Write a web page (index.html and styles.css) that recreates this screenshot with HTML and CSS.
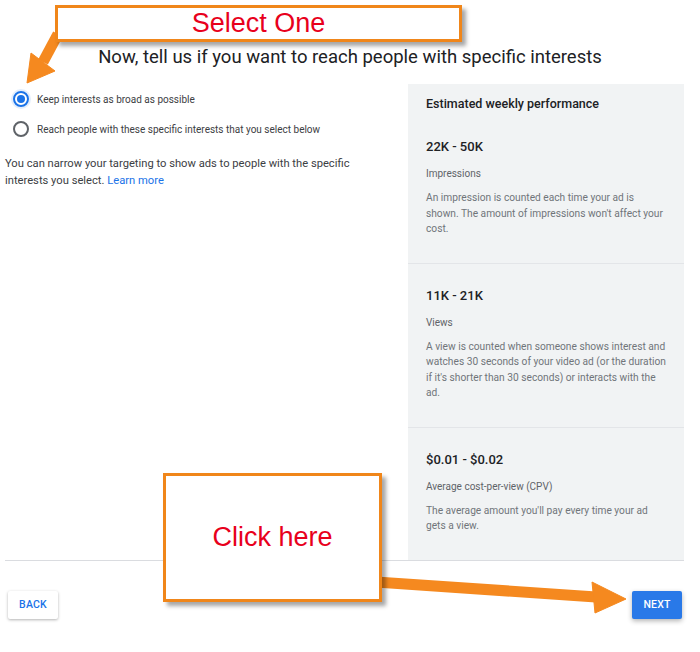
FILE: index.html
```html
<!DOCTYPE html>
<html lang="en">
<head>
    <meta charset="UTF-8">
    <meta name="viewport" content="width=device-width, initial-scale=1.0">
    <title>Interests</title>
    <link rel="stylesheet" href="styles.css">
</head>
<body>
<div class="page">
    <h1 class="title">Now, tell us if you want to reach people with specific interests</h1>
    <div class="content">
        <div class="options">
            <label class="radio-row"><span class="radio checked"></span>Keep interests as broad as possible</label>
            <label class="radio-row"><span class="radio"></span>Reach people with these specific interests that you select below</label>
            <p class="hint">You can narrow your targeting to show ads to people with the specific interests you select. <a href="#">Learn more</a></p>
        </div>
        <aside class="estimate">
            <div class="estimate-title">Estimated weekly performance</div>
            <div class="metric">
                <div class="metric-value">22K - 50K</div>
                <div class="metric-label">Impressions</div>
                <div class="metric-desc">An impression is counted each time your ad is shown. The amount of impressions won't affect your cost.</div>
            </div>
            <div class="metric">
                <div class="metric-value">11K - 21K</div>
                <div class="metric-label">Views</div>
                <div class="metric-desc">A view is counted when someone shows interest and watches 30 seconds of your video ad (or the duration if it's shorter than 30 seconds) or interacts with the ad.</div>
            </div>
            <div class="metric">
                <div class="metric-value">$0.01 - $0.02</div>
                <div class="metric-label">Average cost-per-view (CPV)</div>
                <div class="metric-desc">The average amount you'll pay every time your ad gets a view.</div>
            </div>
        </aside>
    </div>
    <div class="actions">
        <button class="btn btn-back">BACK</button>
        <button class="btn btn-next">NEXT</button>
    </div>
</div>

<!-- annotation layer drawn over the screenshot -->
<div class="callouts">
    <svg class="arrows" width="700" height="652" viewBox="0 0 700 652">
        <g fill="#f5891f" stroke="#f5891f">
            <line x1="58" y1="34" x2="43" y2="62" stroke-width="11"/>
            <polygon points="31,53 55,71 27,83" stroke-width="1"/>
            <line x1="376" y1="582" x2="596" y2="597" stroke-width="11"/>
            <polygon points="592,582 595,613 626,599" stroke-width="1"/>
        </g>
    </svg>
    <div class="note note-select">Select One</div>
    <div class="note note-click">Click here</div>
</div>
</body>
</html>
```

FILE: styles.css
```css
body { margin: 0; font-family: Roboto, "Liberation Sans", Arial, sans-serif; color: #202124; background: #fff; }
.page { width: 700px; height: 652px; box-sizing: border-box; padding: 0 16px 0 5px; position: relative; }
.title { margin: 0; padding: 45px 0 0 11px; font-size: 18.5px; line-height: 24px; font-weight: 400; text-align: center; color: #202124; }
.content { display: grid; grid-template-columns: 1fr 276px; gap: 8px; margin-top: 15px; }

.radio-row { display: flex; align-items: center; gap: 8px; height: 30px; padding-left: 8px; font-size: 10px; color: #3c4043; }
.radio { width: 16px; height: 16px; box-sizing: border-box; border: 2px solid #5f6368; border-radius: 50%; flex: none; position: relative; }
.radio.checked { border-color: #1a73e8; box-shadow: 0 0 0 2px rgba(26, 115, 232, 0.12); }
.radio.checked::after { content: ""; position: absolute; left: 2px; top: 2px; width: 8px; height: 8px; border-radius: 50%; background: #1a73e8; }
.hint { max-width: 352px; margin: 12px 0 0; font-size: 11.2px; line-height: 16.5px; color: #3c4043; }
.hint a { color: #1a73e8; text-decoration: none; }

.estimate { background: #f1f3f4; }
.estimate-title { padding: 12px 18px 3px; font-size: 12.5px; line-height: 16px; font-weight: 500; color: #202124; }
.metric { padding: 22px 17px 26px 18px; }
.metric + .metric { border-top: 1px solid #e3e5e8; }
.metric-value { font-size: 13px; line-height: 20px; font-weight: 500; color: #202124; }
.metric-label { margin-top: 9px; font-size: 10px; line-height: 16px; color: #5f6368; }
.metric-desc { margin-top: 8px; font-size: 10.2px; line-height: 15.5px; color: #70757a; }

.actions { display: flex; justify-content: space-between; border-top: 1px solid #dadce0; padding: 30px 2px 0 3px; }
.btn { width: 50px; height: 28px; border: none; border-radius: 2px; font-family: Roboto, sans-serif; font-size: 10.5px; font-weight: 500; letter-spacing: 0.2px; cursor: pointer; }
.btn-back { background: #fff; color: #1a73e8; box-shadow: 0 1px 3px rgba(0, 0, 0, 0.3); }
.btn-next { background: #2979e8; color: #fff; box-shadow: 0 2px 5px rgba(0, 0, 0, 0.3); }

.callouts { position: absolute; left: 0; top: 0; width: 700px; height: 652px; pointer-events: none; }
.arrows { position: absolute; left: 0; top: 0; }
.note { position: absolute; box-sizing: border-box; display: flex; align-items: center; justify-content: center; background: #fff; border: 3px solid #f0861a; box-shadow: 4px 4px 4px rgba(0, 0, 0, 0.35); font-family: "Liberation Sans", Arial, sans-serif; font-size: 27px; color: #e8001c; }
.note-select { left: 55px; top: 5px; width: 407px; height: 37px; }
.note-click { left: 163px; top: 473px; width: 219px; height: 129px; }
```
